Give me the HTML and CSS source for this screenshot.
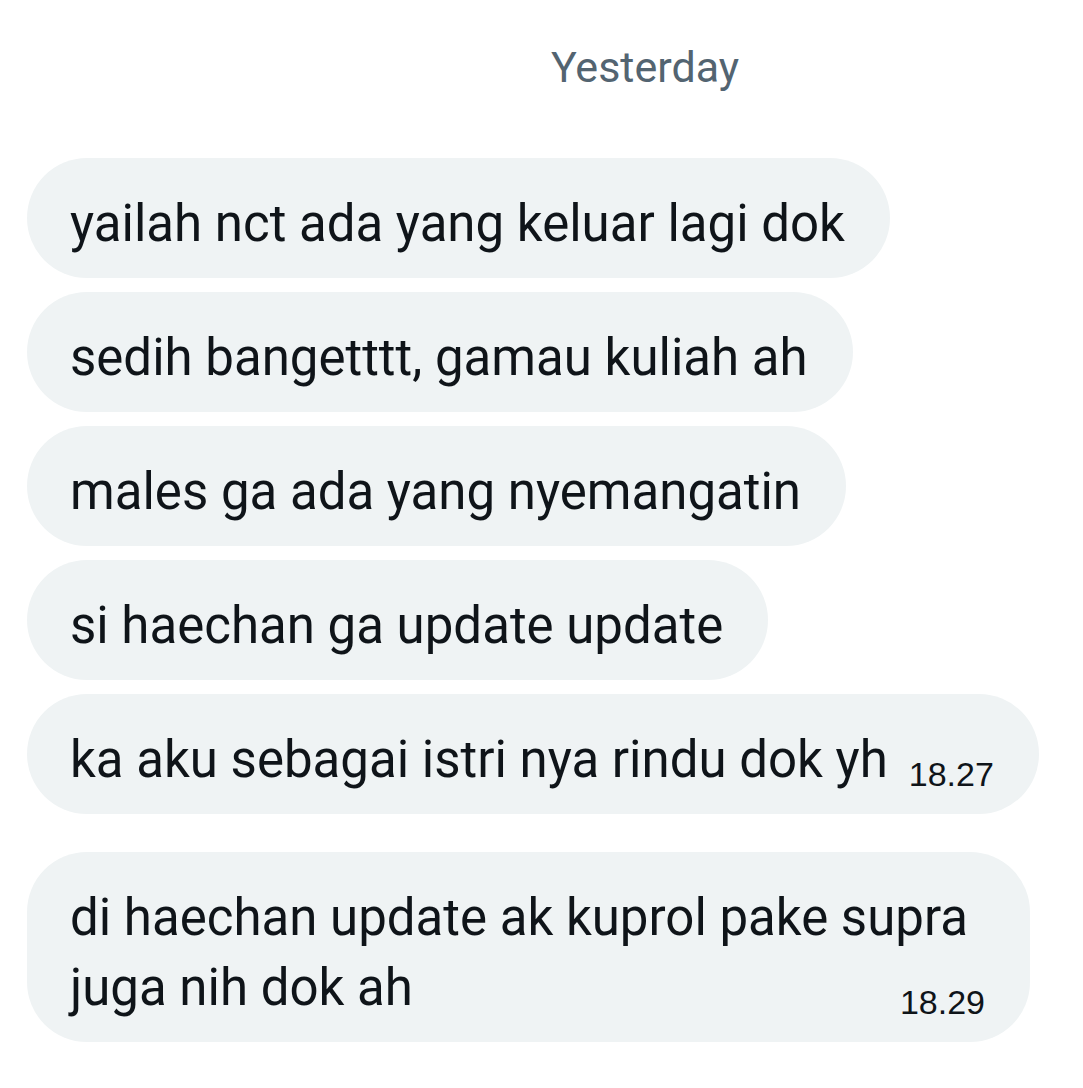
FILE: index.html
```html
<!DOCTYPE html>
<html lang="en">
<head>
    <meta charset="UTF-8">
    <meta name="viewport" content="width=device-width, initial-scale=1.0">
    <title>Messages</title>
    <link rel="stylesheet" href="styles.css">
</head>
<body>
    <div class="chat">
        <div class="day-label">Yesterday</div>

        <div class="group">
            <div class="bubble">yailah nct ada yang keluar lagi dok</div>
            <div class="bubble">sedih bangetttt, gamau kuliah ah</div>
            <div class="bubble">males ga ada yang nyemangatin</div>
            <div class="bubble">si haechan ga update update</div>
            <div class="bubble">ka aku sebagai istri nya rindu dok yh<span class="time">18.27</span></div>
        </div>

        <div class="group">
            <div class="bubble bubble-wrap">di haechan update ak kuprol pake supra juga nih dok ah<span class="time">18.29</span></div>
        </div>
    </div>
</body>
</html>
```

FILE: styles.css
```css
body {
    margin: 0;
    background-color: #ffffff;
    font-family: Roboto, "Noto Sans", Arial, sans-serif;
    color: #0f1419;
}
.chat {
    display: flex;
    flex-direction: column;
    padding: 0 0 0 27px;
}
.day-label {
    padding: 42px 0 0 180px;
    text-align: center;
    font-size: 43px;
    line-height: 50px;
    color: #536471;
    margin-bottom: 66px;
}
.group {
    display: flex;
    flex-direction: column;
    align-items: flex-start;
    gap: 14px;
    margin-bottom: 38px;
}
.bubble {
    background-color: #eff3f4;
    border-radius: 60px;
    padding: 31px 45px 19px 43px;
    font-size: 51px;
    line-height: 70px;
    max-width: 940px;
}
.bubble-wrap {
    max-width: 915px;
}
.time {
    float: right;
    margin: 32px 0 0 21px;
    font-family: "Liberation Sans", Arial, sans-serif;
    font-size: 34px;
    line-height: 34px;
    color: #0f1419;
}
```
